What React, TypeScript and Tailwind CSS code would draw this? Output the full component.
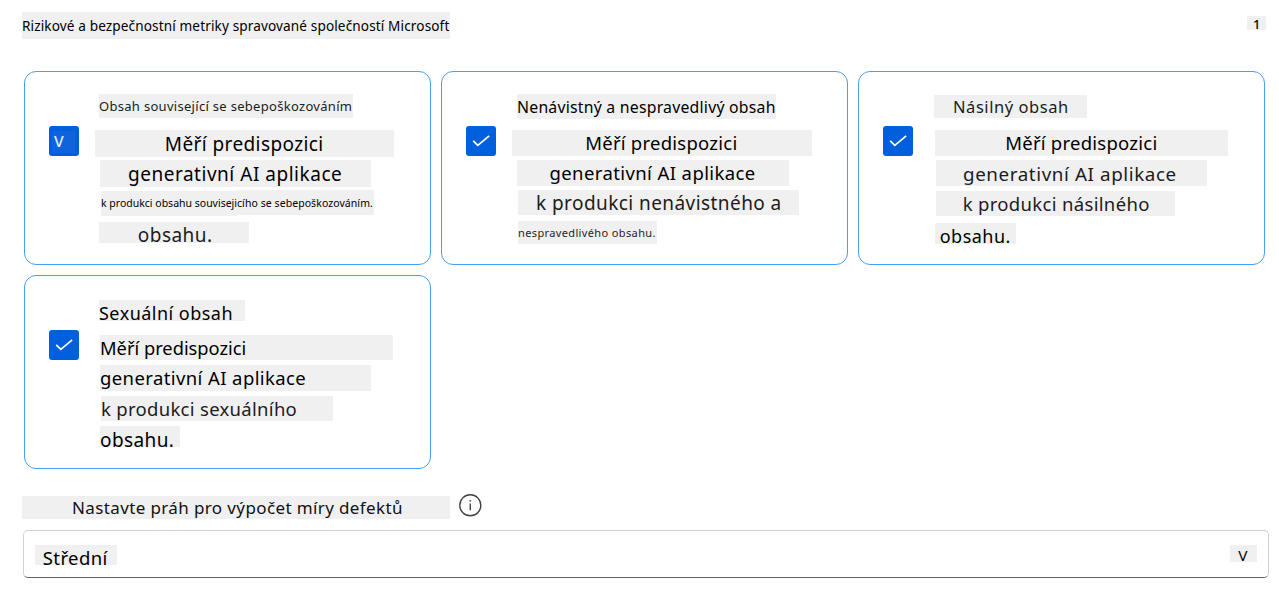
type LineProps = { box: string; text: string; children: string };

function Line({ box, text, children }: LineProps) {
  return (
    <div className={`bg-[#f0f0f0] whitespace-nowrap ${box}`}>
      <p className={text}>{children}</p>
    </div>
  );
}

function Check() {
  return (
    <span className="mt-[54px] flex size-[30px] shrink-0 rounded-[3px] bg-[#005fdc]">
      <svg width="30" height="30" viewBox="0 0 30 30" fill="none" stroke="#fff" strokeWidth="1.7">
        <path d="M7.2 14.8 L11.8 19.4 L23.2 9.8" />
      </svg>
    </span>
  );
}

function LetterCheck() {
  return (
    <span className="mt-[54px] flex size-[30px] shrink-0 rounded-[3px] bg-[#005fdc] pl-[3px] pt-[5px]">
      <span className="h-[22px] w-[23px] bg-[#0f64de] pl-[2px] text-[19px] leading-[19px] text-[#e3edfc]">v</span>
    </span>
  );
}

const card = 'flex h-[194px] rounded-xl border border-[#479ef5] pl-[24px]';

export default function App() {
  return (
    <main className="h-[591px] w-[1279px] overflow-hidden bg-white font-['Noto_Sans',sans-serif] text-black">
      <header className="flex justify-between pt-[12px] pl-[22px] pr-[13px]">
        <Line box="w-[428px] h-[27px]" text="text-[13.6px] tracking-[0.12px] leading-[27px]">
          Rizikové a bezpečnostní metriky spravované společností Microsoft
        </Line>
        <Line box="mt-[4px] w-[19px] h-[14px] pl-[6px]" text="text-[13px] leading-[16px] font-medium">1</Line>
      </header>

      <section className="mt-[32px] ml-[24px] grid w-[1241px] grid-cols-3 gap-[10px]">
        <article className={card}>
          <LetterCheck />
          <div className="ml-[16px] pt-[22px]">
            <Line box="ml-[4px] w-[254px] h-[24px]" text="text-[13px] tracking-[0.3px] leading-[24px] text-[#1c1c1c]">
              Obsah související se sebepoškozováním
            </Line>
            <Line box="mt-[12px] w-[299px] h-[27px] pl-[69.8px]" text="text-[19px] tracking-[0.4px] leading-[28px]">
              Měří predispozici
            </Line>
            <Line box="mt-[3px] ml-[5px] w-[271px] h-[27px] pl-[28px]" text="text-[19px] tracking-[0.52px] leading-[29px]">
              generativní AI aplikace
            </Line>
            <div className="mt-[3px] ml-[6px] flex">
              <Line box="mt-px w-[136px] h-[25px]" text="text-[10.5px] leading-[25px]">k produkci obsahu souviseji</Line>
              <Line box="w-[137px] h-[25px]" text="text-[10.5px] tracking-[0.07px] leading-[26px]">cího se sebepoškozováním.</Line>
            </div>
            <Line box="mt-[6px] ml-[4px] w-[150px] h-[21px] pl-[38.8px]" text="text-[19px] tracking-[0.45px] leading-[27px] text-[#1c1c1c]">
              obsahu.
            </Line>
          </div>
        </article>

        <article className={card}>
          <Check />
          <div className="ml-[16px] pt-[22px]">
            <Line box="ml-[5px] w-[259px] h-[25px]" text="text-[15.8px] tracking-[0.23px] leading-[26px]">
              Nenávistný a nespravedlivý obsah
            </Line>
            <Line box="mt-[11px] w-[300px] h-[26px] pl-[73.2px]" text="text-[18.5px] tracking-[0.25px] leading-[26px]">
              Měří predispozici
            </Line>
            <Line box="mt-[4px] ml-[5px] w-[272px] h-[26px] pl-[32.5px]" text="text-[18.5px] tracking-[0.4px] leading-[26px]">
              generativní AI aplikace
            </Line>
            <Line box="mt-[4px] ml-[6px] w-[281px] h-[25px] pl-[18px]" text="text-[19px] tracking-[0.43px] leading-[27px] text-[#1c1c1c]">
              k produkci nenávistného a
            </Line>
            <Line box="mt-[6px] ml-[6px] w-[139px] h-[23px]" text="text-[11px] tracking-[0.37px] leading-[23px] text-[#262626]">
              nespravedlivého obsahu.
            </Line>
          </div>
        </article>

        <article className={card}>
          <Check />
          <div className="ml-[21px] pt-[23px]">
            <Line box="w-[153px] h-[23px] pl-[19px]" text="text-[16.5px] tracking-[0.55px] leading-[24px] text-[#1c1c1c]">
              Násilný obsah
            </Line>
            <Line box="mt-[12px] ml-px w-[293px] h-[26px] pl-[70.2px]" text="text-[18.5px] tracking-[0.25px] leading-[26px]">
              Měří predispozici
            </Line>
            <Line box="mt-[4px] ml-[2px] w-[271px] h-[26px] pl-[27px]" text="text-[18.8px] tracking-[0.6px] leading-[28px] text-[#1c1c1c]">
              generativní AI aplikace
            </Line>
            <Line box="mt-[5px] ml-[2px] w-[239px] h-[25px] pl-[26.7px]" text="text-[18.5px] tracking-[0.33px] leading-[25px] text-[#1c1c1c]">
              k produkci násilného
            </Line>
            <Line box="mt-[7px] ml-px w-[81px] h-[21px] pl-[4.7px]" text="text-[18px] tracking-[0.5px] leading-[26px]">
              obsahu.
            </Line>
          </div>
        </article>

        <article className={card}>
          <Check />
          <div className="ml-[20px] pt-[24px]">
            <Line box="w-[146px] h-[21px]" text="text-[18px] tracking-[0.48px] leading-[26px]">
              Sexuální obsah
            </Line>
            <Line box="mt-[14px] ml-px w-[293px] h-[25px]" text="text-[18.3px] leading-[25px]">
              Měří predispozici
            </Line>
            <Line box="mt-[5px] ml-px w-[271px] h-[26px]" text="text-[18.5px] tracking-[0.4px] leading-[26px]">
              generativní AI aplikace
            </Line>
            <Line box="mt-[5px] ml-[2px] w-[232px] h-[25px]" text="text-[18.5px] tracking-[0.3px] leading-[25px] text-[#1c1c1c]">
              k produkci sexuálního
            </Line>
            <Line box="mt-[5px] ml-px w-[80px] h-[21px]" text="text-[19px] tracking-[0.4px] leading-[28px]">
              obsahu.
            </Line>
          </div>
        </article>
      </section>

      <section className="mt-[24px] flex pl-[22px]">
        <Line box="mt-[3px] w-[428px] h-[23px] pl-[50px]" text="text-[17px] tracking-[0.38px] leading-[23px] text-[#111]">
          Nastavte práh pro výpočet míry defektů
        </Line>
        <svg className="ml-[8px]" width="24" height="24" viewBox="0 0 24 24" fill="none" stroke="#424242" strokeWidth="1.4">
          <circle cx="12.3" cy="12.3" r="10.5" />
          <path d="M12.3 10.6 V17.2" />
          <circle cx="12.3" cy="7.8" r="0.9" fill="#424242" stroke="none" />
        </svg>
      </section>

      <div className="mt-[11px] ml-[23px] flex h-[48px] w-[1246px] justify-between rounded-[5px] border border-[#d1d1d1] border-b-[#616161] pt-[14px] pl-[11px] pr-[11px]">
        <Line box="w-[82px] h-[20px] pl-[7.8px]" text="text-[18.5px] tracking-[0.4px] leading-[25px]">
          Střední
        </Line>
        <Line box="w-[27px] h-[17px] pl-[8.3px]" text="text-[15.3px] leading-[20px]">V</Line>
      </div>
    </main>
  );
}
